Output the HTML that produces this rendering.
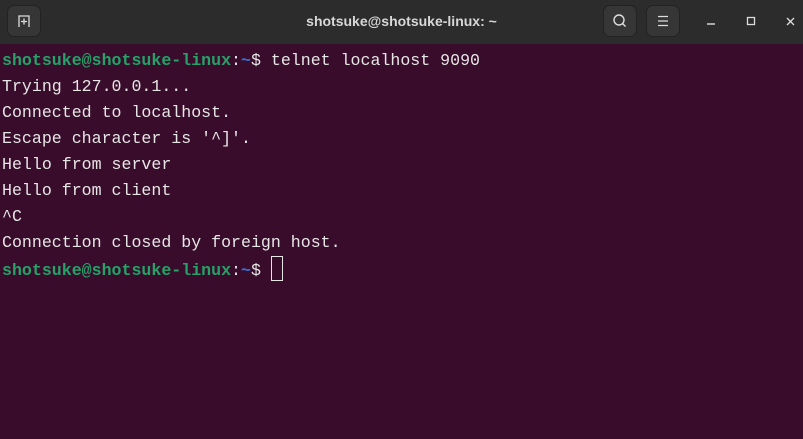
<!DOCTYPE html>
<html><head><style>
html,body{margin:0;padding:0;width:803px;height:439px;overflow:hidden;background:#380c2a;}
.bar{position:absolute;left:0;top:0;width:803px;height:44px;background:#2c2c2c;}
.btn{position:absolute;top:5px;width:34px;height:32px;background:#363636;border-radius:7px;border:1px solid #222;box-sizing:border-box;display:flex;align-items:center;justify-content:center;}
.title{position:absolute;top:0;left:0;width:803px;text-align:center;color:#d8d8d8;font:bold 14px "Liberation Sans",sans-serif;line-height:42px;}
.term{position:absolute;left:2px;top:48px;font-family:"Liberation Mono",monospace;font-size:16.6px;line-height:26px;color:#e6e6e6;white-space:pre;}
.g{color:#26a269;font-weight:bold}.b{color:#3a6fcf;font-weight:bold}
.cur{display:inline-block;width:10px;height:23px;border:1px solid #e6e6e6;vertical-align:-6px;}
</style></head><body>
<div class="bar">
<div class="title">shotsuke@shotsuke-linux: ~</div>
<div class="btn" style="left:7px"><svg width="16" height="16" viewBox="0 0 16 16"><path d="M3 14V3h10v11M8 5.5v6M5 8.5h6" stroke="#ddd" stroke-width="1.3" fill="none"/></svg></div>
<div class="btn" style="left:603px"><svg width="16" height="16" viewBox="0 0 16 16"><circle cx="7" cy="7" r="5" stroke="#ddd" stroke-width="1.4" fill="none"/><path d="M10.5 10.5l3 3" stroke="#ddd" stroke-width="1.4"/></svg></div>
<div class="btn" style="left:646px"><svg width="16" height="16" viewBox="0 0 16 16"><path d="M3 3.5h10M3 8h10M3 12.5h10" stroke="#ddd" stroke-width="1.2"/></svg></div>
<svg style="position:absolute;left:700px;top:10px" width="100" height="25"><path d="M127 14h0M7 14h8" stroke="#ddd" stroke-width="1.4"/><rect x="47.5" y="7.5" width="7" height="7" stroke="#ddd" stroke-width="1.3" fill="none"/><path d="M87 8l7 7M94 8l-7 7" stroke="#ddd" stroke-width="1.3"/></svg>
</div>
<div class="term"><span class="g">shotsuke@shotsuke-linux</span>:<span class="b">~</span>$ telnet localhost 9090
Trying 127.0.0.1...
Connected to localhost.
Escape character is '^]'.
Hello from server
Hello from client
^C
Connection closed by foreign host.
<span class="g">shotsuke@shotsuke-linux</span>:<span class="b">~</span>$ <span class="cur"></span></div>
</body></html>
